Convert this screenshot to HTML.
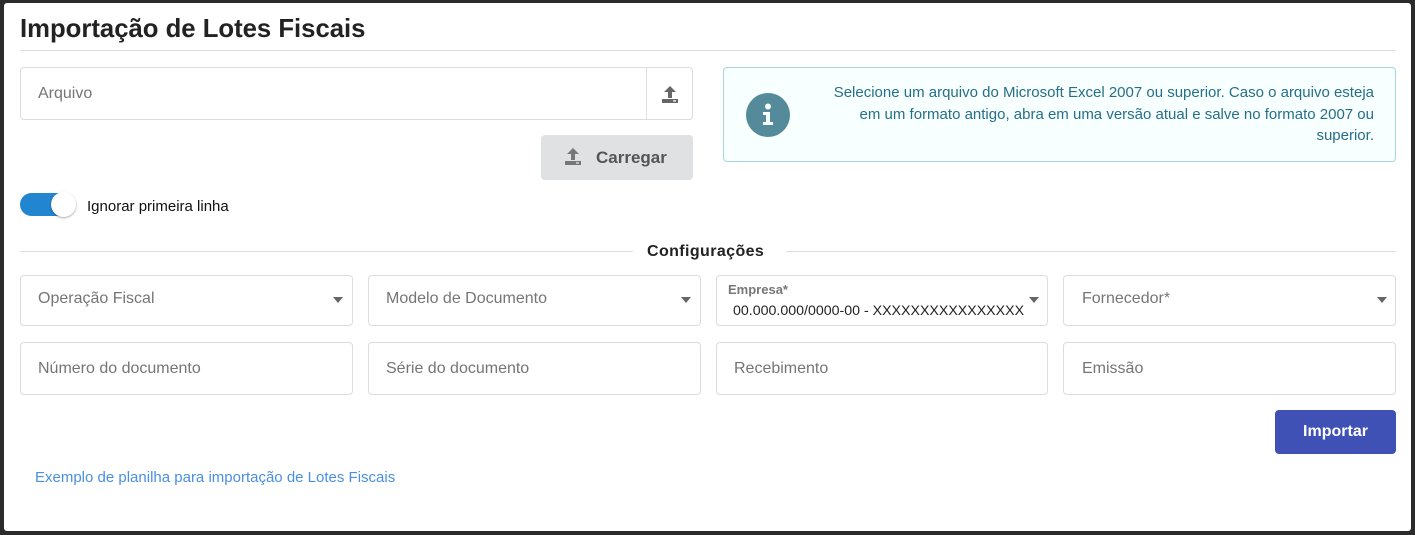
<!DOCTYPE html>
<html><head><meta charset="utf-8"><style>
*{box-sizing:border-box;margin:0;padding:0}
body{width:1415px;height:535px;background:#2b2b2b;font-family:"Liberation Sans",Arial,sans-serif;position:relative;overflow:hidden}
.panel{position:absolute;left:4px;top:3px;width:1407px;height:528px;background:#fff;border-radius:3px}
.a{position:absolute}
.box{position:absolute;border:1px solid #dcdcdc;border-radius:4px;background:#fff}
.ph{position:absolute;font-size:16px;color:#757575}
.car{position:absolute;width:0;height:0;border-left:5px solid transparent;border-right:5px solid transparent;border-top:6px solid #666}
</style></head><body>
<div class="panel"></div>
<div class="a" style="left:20px;top:15px;font-size:25.7px;font-weight:bold;color:#222">Importação de Lotes Fiscais</div>
<div class="a" style="left:20px;top:50px;width:1376px;height:1px;background:#ddd"></div>

<div class="box" style="left:20px;top:67px;width:673px;height:53px"></div>
<div class="a" style="left:646px;top:68px;width:1px;height:51px;background:#e0e0e0"></div>
<div class="ph" style="left:38px;top:85px">Arquivo</div>
<svg class="a" style="left:660px;top:84px" width="20" height="20" viewBox="0 0 20 20"><path d="M10 2 L4 8 H8 V14 H12 V8 H16 Z" fill="#666"/><rect x="2" y="15" width="16" height="4" fill="#666"/><rect x="13" y="16.3" width="3" height="1.3" fill="#fff"/></svg>

<div class="a" style="left:541px;top:135px;width:152px;height:45px;background:#e0e1e2;border-radius:4px"></div>
<svg class="a" style="left:563px;top:147px" width="20" height="20" viewBox="0 0 20 20"><path d="M10 1 L4 7 H8 V13 H12 V7 H16 Z" fill="#777"/><rect x="2" y="14" width="16" height="4" fill="#777"/><rect x="13" y="15.3" width="3" height="1.3" fill="#e0e1e2"/></svg>
<div class="a" style="left:596px;top:148px;font-size:17px;font-weight:bold;color:#555">Carregar</div>

<div class="a" style="left:20px;top:193px;width:55px;height:23px;background:#2185d0;border-radius:12px"></div>
<div class="a" style="left:51px;top:192px;width:25px;height:25px;background:#fff;border-radius:50%;box-shadow:0 1px 2px rgba(0,0,0,.35)"></div>
<div class="a" style="left:87px;top:198px;font-size:15px;color:#111">Ignorar primeira linha</div>

<div class="a" style="left:723px;top:67px;width:673px;height:95px;background:#f7ffff;border:1px solid #a9d5de;border-radius:4px"></div>
<svg class="a" style="left:746px;top:93px" width="44" height="44" viewBox="0 0 44 44"><circle cx="22" cy="22" r="22" fill="#558a9b"/><circle cx="22" cy="13.5" r="3" fill="#f7ffff"/><path d="M17 19 H24 V29 H27 V32 H17 V29 H20 V22 H17 Z" fill="#f7ffff"/></svg>
<div class="a" style="left:826px;top:82px;width:548px;text-align:right;font-size:15px;line-height:21.5px;color:#276f86">Selecione um arquivo do Microsoft Excel 2007 ou superior. Caso o arquivo esteja em um formato antigo, abra em uma versão atual e salve no formato 2007 ou superior.</div>

<div class="a" style="left:20px;top:251px;width:613px;height:1px;background:#ddd"></div>
<div class="a" style="left:786px;top:251px;width:610px;height:1px;background:#ddd"></div>
<div class="a" style="left:647px;top:243px;font-size:16px;font-weight:bold;color:#222;letter-spacing:.4px">Configurações</div>

<div class="box" style="left:20px;top:275px;width:333px;height:51px"></div><div class="ph" style="left:38px;top:290px">Operação Fiscal</div><div class="car" style="left:333px;top:297px"></div>
<div class="box" style="left:368px;top:275px;width:333px;height:51px"></div><div class="ph" style="left:386px;top:290px">Modelo de Documento</div><div class="car" style="left:681px;top:297px"></div>
<div class="box" style="left:716px;top:275px;width:332px;height:51px"></div><div class="a" style="left:728px;top:282px;font-size:13px;font-weight:bold;color:#777">Empresa*</div><div class="a" style="left:733px;top:303px;font-size:14.2px;color:#222">00.000.000/0000-00 - XXXXXXXXXXXXXXXX</div><div class="car" style="left:1029px;top:297px"></div>
<div class="box" style="left:1063px;top:275px;width:333px;height:51px"></div><div class="ph" style="left:1082px;top:290px">Fornecedor*</div><div class="car" style="left:1377px;top:297px"></div>

<div class="box" style="left:20px;top:342px;width:333px;height:53px"></div><div class="ph" style="left:38px;top:360px">Número do documento</div>
<div class="box" style="left:368px;top:342px;width:333px;height:53px"></div><div class="ph" style="left:386px;top:360px">Série do documento</div>
<div class="box" style="left:716px;top:342px;width:332px;height:53px"></div><div class="ph" style="left:734px;top:360px">Recebimento</div>
<div class="box" style="left:1063px;top:342px;width:333px;height:53px"></div><div class="ph" style="left:1082px;top:360px">Emissão</div>

<div class="a" style="left:1275px;top:410px;width:121px;height:44px;background:#3f51b5;border-radius:4px;color:#fff;font-size:16px;font-weight:bold;text-align:center;line-height:44px">Importar</div>
<div class="a" style="left:35px;top:469px;font-size:15px;color:#4a8fe0">Exemplo de planilha para importação de Lotes Fiscais</div>
</body></html>
